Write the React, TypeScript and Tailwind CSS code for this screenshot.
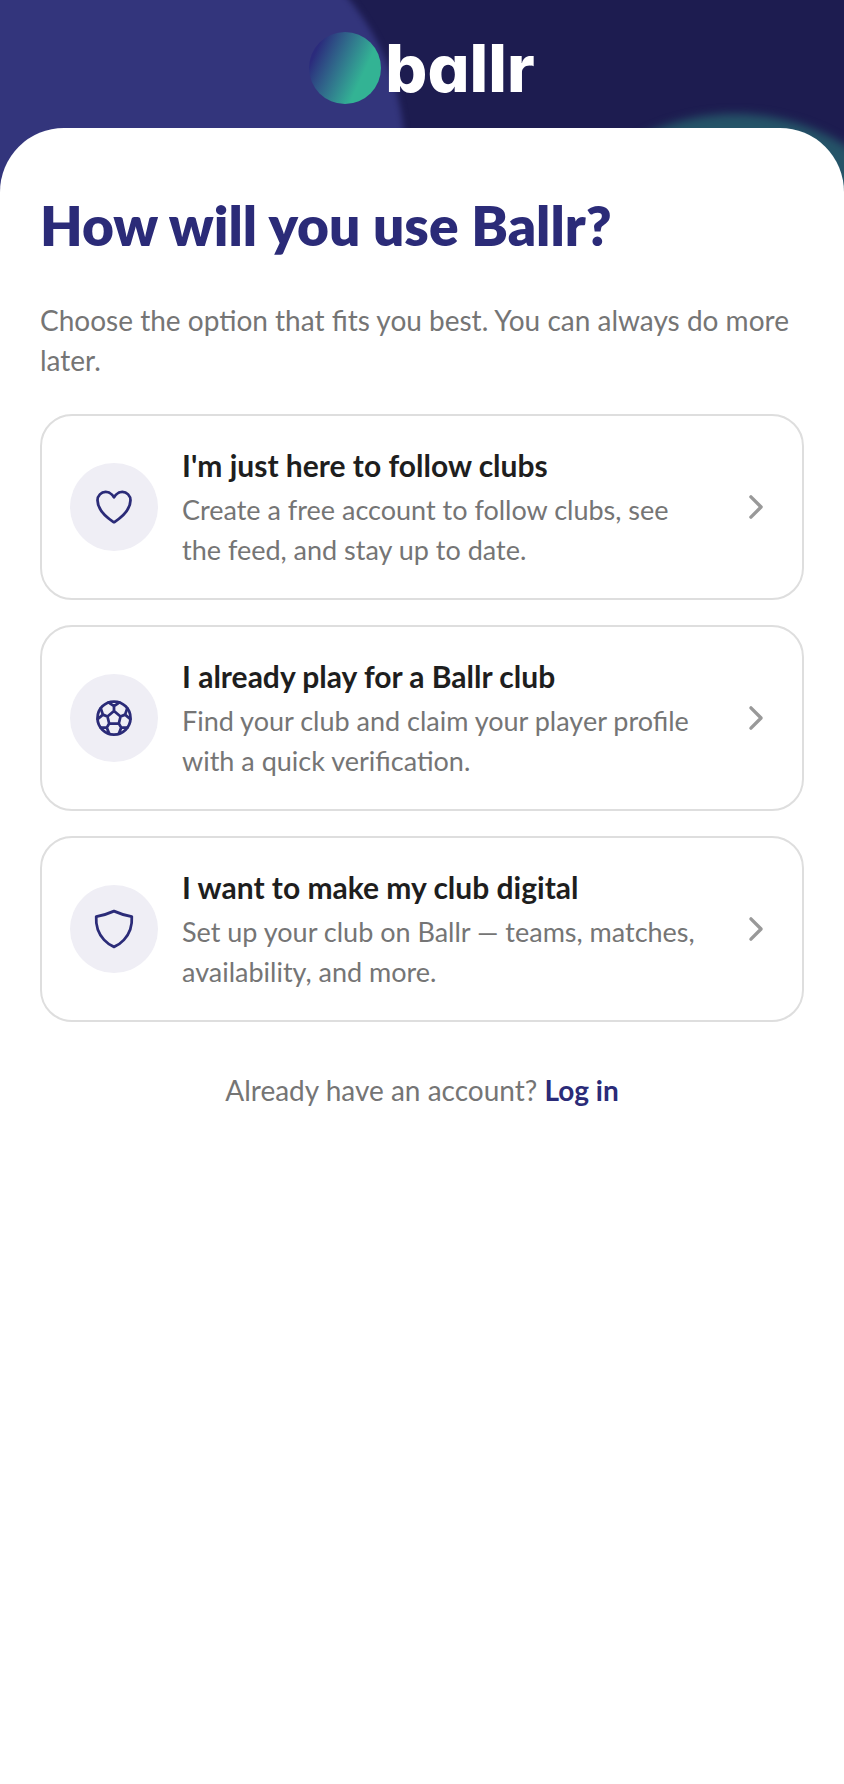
import type { IconType } from "react-icons";
import {
    IoChevronForward,
    IoFootballOutline,
    IoHeartOutline,
    IoShieldOutline,
} from "react-icons/io5";

type Option = {
    title: string;
    description: string;
    Icon: IconType;
};

const options: Option[] = [
    {
        title: "I'm just here to follow clubs",
        description: "Create a free account to follow clubs, see the feed, and stay up to date.",
        Icon: IoHeartOutline,
    },
    {
        title: "I already play for a Ballr club",
        description: "Find your club and claim your player profile with a quick verification.",
        Icon: IoFootballOutline,
    },
    {
        title: "I want to make my club digital",
        description: "Set up your club on Ballr — teams, matches, availability, and more.",
        Icon: IoShieldOutline,
    },
];

function Logo() {
    return (
        <div className="relative flex h-32 items-center justify-center gap-1 pt-2">
            <div className="size-[72px] rounded-full bg-linear-115 from-[#2b2b7c] from-15% to-[#33b394] to-70%" />
            {/* cv11 is Inter's single-storey a */}
            <span className="font-['Inter',sans-serif] text-[66px] leading-[72px] font-extrabold text-white [font-feature-settings:'cv11']">
                ballr
            </span>
        </div>
    );
}

function OptionCard({ title, description, Icon }: Option) {
    return (
        <button
            type="button"
            className="flex w-full cursor-pointer items-center gap-6 rounded-[32px] border-2 border-[#dedede] bg-white p-7 text-left"
        >
            <span className="flex size-[88px] shrink-0 items-center justify-center rounded-full bg-[#efeef5]">
                <Icon className="size-11 text-[#2b2b78]" />
            </span>
            <span className="flex flex-1 flex-col gap-1">
                <span className="text-[30px] leading-[42px] font-bold text-[#1e1e1e]">{title}</span>
                <span className="text-[27px] leading-10 text-[#757575]">{description}</span>
            </span>
            <IoChevronForward className="size-9 shrink-0 text-[#999999]" />
        </button>
    );
}

export default function App() {
    return (
        <div className="relative flex min-h-screen flex-col overflow-hidden bg-[#1d1c50] font-['Lato',sans-serif]">
            <div className="absolute -top-[92px] -left-[91px] size-[496px] rounded-full bg-[#33357c] blur-[3px]" />
            <div className="absolute top-[114px] -right-[101px] size-[420px] rounded-full bg-[#255468] blur-[5px]" />

            <header>
                <Logo />
            </header>

            <main className="relative flex-1 rounded-t-[64px] bg-white px-10 pt-15">
                <h1 className="text-[55px] leading-[74px] font-extrabold text-[#2b2b78]">How will you use Ballr?</h1>
                <p className="mt-[38px] text-[28px] leading-10 text-[#757575]">
                    Choose the option that fits you best. You can always do more later.
                </p>

                <div className="mt-[34px] flex flex-col gap-[25px]">
                    {options.map((option) => (
                        <OptionCard key={option.title} {...option} />
                    ))}
                </div>

                <p className="mt-12 text-center text-[28px] leading-10 text-[#757575]">
                    Already have an account?{" "}
                    <a href="#login" className="font-bold text-[#2b2b78]">
                        Log in
                    </a>
                </p>
            </main>
        </div>
    );
}
